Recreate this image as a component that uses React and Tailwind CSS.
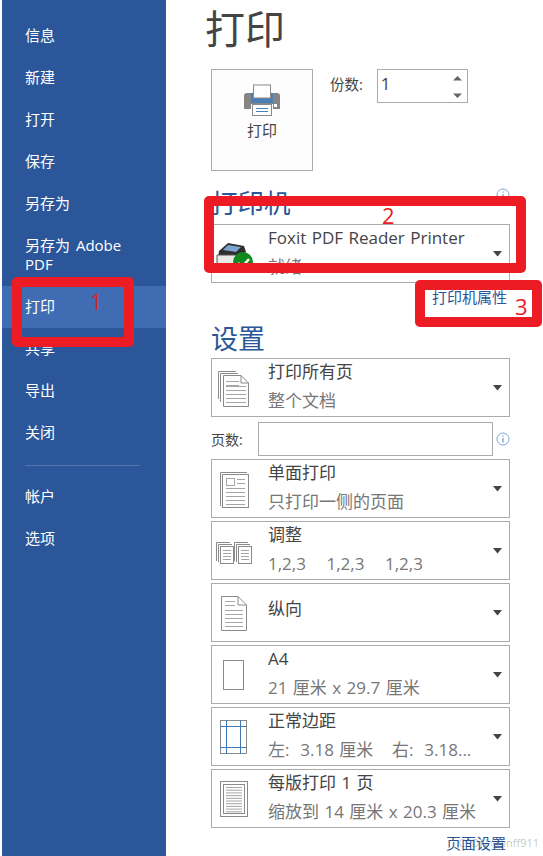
const FONT = { fontFamily: '"Open Sans","Noto Sans CJK SC",sans-serif' };

function Arrow() {
  return <svg width="9" height="6" viewBox="0 0 9 6" className="absolute right-[7px] top-[26px]"><path d="M0 0H9L4.5 5.5Z" fill="#444" /></svg>;
}

function Lines({ x, y, w, n, step = 4, c = "#a6a6a6" }) {
  return Array.from({ length: n }).map((_, i) => <path key={i} d={`M${x} ${y + i * step + 0.5}h${w}`} stroke={c} fill="none" />);
}

const P = "#8a8a8a";
const I = ({ children }) => <svg width="40" height="44" viewBox="0 0 40 44" fill="none" className="shrink-0">{children}</svg>;

const IconAll = () => <I>
  <path d="M4.5 5.5H22M4.5 5.5V33" stroke={P} />
  <path d="M6.5 7.5H24M6.5 7.5V36" stroke={P} />
  <path d="M9.5 9.5H27L34.5 17V40.5H9.5Z" fill="#fff" stroke={P} />
  <path d="M27 9.5V17H34.5" stroke={P} />
  <Lines x={12} y={15} w={13} n={2} />
  <Lines x={12} y={20} w={20} n={5} />
</I>;
const IconSingle = () => <I>
  <path d="M6.5 5.5H33M6.5 5.5V39" stroke={P} />
  <rect x="8.5" y="7.5" width="26" height="33" fill="#fff" stroke={P} />
  <rect x="12.5" y="11.5" width="8" height="7" stroke="#a6a6a6" />
  <Lines x={23} y={12} w={8} n={2} step={4} />
  <Lines x={12} y={21} w={19} n={5} />
</I>;
const Mini = ({ x }) => <g>
  <path d={`M${x + .5} 13.5H${x + 14}M${x + .5} 13.5V32`} stroke={P} />
  <path d={`M${x + 2.5} 15.5H${x + 16}M${x + 2.5} 15.5V33`} stroke={P} />
  <rect x={x + 4.5} y="17.5" width="13" height="17" fill="#fff" stroke={P} />
  <Lines x={x + 7} y={21} w={8} n={4} step={3} />
</g>;
const IconCollate = () => <I><Mini x={2} /><Mini x={20} /></I>;
const IconPortrait = () => <I>
  <path d="M7.5 5.5H24L32.5 14V39.5H7.5Z" stroke={P} fill="#fff" />
  <path d="M24 5.5V14H32.5" stroke={P} />
  <Lines x={11} y={10} w={10} n={2} />
  <Lines x={11} y={19} w={18} n={5} />
</I>;
const IconA4 = () => <I><rect x="9.5" y="7.5" width="20" height="29" stroke={P} fill="#fff" /></I>;
const IconMargin = () => <I>
  <rect x="6.5" y="5.5" width="26" height="33" stroke={P} fill="#fff" />
  <path d="M12.5 5V39M26.5 5V39M6 11.5H33M6 32.5H33" stroke="#3f76b8" />
</I>;
const IconPages = () => <I>
  <rect x="6.5" y="4.5" width="27" height="35" stroke={P} fill="#fff" />
  <rect x="9.5" y="7.5" width="21" height="29" stroke={P} fill="#fff" />
  <Lines x={12} y={10} w={16} n={10} step={2.7} />
</I>;

function Row({ icon, title, sub, className = "" }) {
  return (
    <div className={`relative flex h-[59px] w-[299px] items-center border border-[#ababab] bg-white pl-[2px] ${className}`}>
      {icon}
      <div className="ml-[14px] flex h-full flex-col self-start overflow-hidden whitespace-nowrap [word-spacing:1px]">
        <div className={`text-[17px] leading-[22px] text-[#444] ${sub ? "mt-[2px]" : "mt-[14px]"}`}>{title}</div>
        {sub && <div className="mt-[7px] flex whitespace-pre text-[17px] leading-[22px] text-[#777]">{sub}</div>}
      </div>
      <Arrow />
    </div>
  );
}

function Info({ className = "" }) {
  return <svg width="14" height="14" viewBox="0 0 14 14" fill="none" className={className}><circle cx="7" cy="7" r="6" stroke="#7ea6d8" /><path d="M7 3.5v1.2M7 6v4.5" stroke="#4a7ebb" /></svg>;
}

const NAV1 = ["信息", "新建", "打开", "保存", "另存为"];
const NAV2 = ["共享", "导出", "关闭"];

function NavItem({ children, active, low }) {
  return <div className={`flex h-[42px] items-center pl-[23px] text-[15px] text-white ${low ? "pt-[1px]" : "pb-[2px]"} ${active ? "bg-[#3f6cb3]" : ""}`}>{children}</div>;
}

function RedBox({ className }) {
  return <div className={`absolute rounded-[5px] border-[10px] border-[#ed1c24] ${className}`} />;
}

export default function App() {
  return (
    <div className="relative flex h-[856px] w-[543px] overflow-hidden bg-white pl-[2px]" style={FONT}>
      <aside className="h-full w-[164px] shrink-0 bg-[#2b579a] pt-[14px]">
        {NAV1.map((t) => <NavItem key={t} low>{t}</NavItem>)}
        <div className="flex h-[62px] items-center pl-[23px] pr-[20px] text-[15px] leading-[19px] text-white [word-spacing:2px]">另存为 Adobe PDF</div>
        <NavItem active>打印</NavItem>
        {NAV2.map((t) => <NavItem key={t}>{t}</NavItem>)}
        <div className="mx-[23px] mt-[11px] mb-[10px] h-px w-[115px] bg-[#5577ad]" />
        <NavItem>帐户</NavItem>
        <NavItem>选项</NavItem>
      </aside>

      <main className="flex-1 pl-[45px]">
        <h1 className="-ml-[6px] mt-[3px] h-[51px] text-[40px] font-normal leading-[51px] text-[#444]">打印</h1>

        <div className="mt-[15px] flex items-start">
          <div className="flex h-[102px] w-[102px] flex-col items-center border border-[#ababab] bg-[#fdfdfd] pt-[14px]">
            <svg width="36" height="32" viewBox="0 0 36 32" fill="none">
              <path d="M3 9H33A3 3 0 0 1 36 12V25H29V20H7V25H0V12A3 3 0 0 1 3 9Z" fill="#858585" />
              <rect x="7" y="9" width="22" height="10" fill="#4a7ebb" />
              <rect x="9.5" y="1" width="17" height="13" fill="#fff" stroke="#8a8a8a" />
              <rect x="8.5" y="20.5" width="19" height="11" fill="#fff" stroke="#8a8a8a" />
              <path d="M12 24.5H24M12 27.5H24" stroke="#4a7ebb" />
              <rect x="30" y="20" width="3" height="3" fill="#fff" />
            </svg>
            <div className="mt-[4px] text-[15px] leading-[20px] text-[#444]">打印</div>
          </div>
          <div className="ml-[17px] mt-[6px] text-[14.5px] leading-[20px] text-[#444]">份数:</div>
          <div className="relative ml-[14px] h-[34px] w-[91px] border border-[#ababab] bg-white pl-[3px] text-[17px] leading-[28px] text-[#444]">
            1
            <svg width="11" height="24" viewBox="0 0 11 24" className="absolute right-[4px] top-[5px]"><path d="M1 5.5L5.5 1L10 5.5ZM1 18.5H10L5.5 23Z" fill="#666" /></svg>
          </div>
        </div>

        <div className="relative mt-[15px] h-[38px] w-[299px]">
          <div className="text-[26.5px] leading-[34px] text-[#2b579a]">打印机</div>
          <Info className="absolute right-0 top-[2px]" />
        </div>
        <div className="relative h-[59px] w-[299px] border border-[#ababab] bg-white pl-[2px]">
          <div className="flex h-full items-start">
            <svg width="40" height="44" viewBox="0 0 40 44" fill="none" className="mt-[13px] shrink-0">
              <path d="M5 13L14 5L30 8L32 14L20 22H4Z" fill="#2e2e2e" />
              <path d="M14 7L27 9L22 14L9 12Z" fill="#7aa5cf" />
              <path d="M3 17H22V27H3Z" fill="#e9e9e9" stroke="#555" />
              <circle cx="29" cy="24" r="10" fill="#128a1f" />
              <path d="M24 25L28 29L35 21" stroke="#fff" strokeWidth="2.5" />
            </svg>
            <div className="ml-[14px] whitespace-nowrap [word-spacing:1px]">
              <div className="mt-[2px] text-[17px] leading-[22px] text-[#444]">Foxit PDF Reader Printer</div>
              <div className="mt-[7px] text-[17px] leading-[22px] text-[#777]">就绪</div>
            </div>
          </div>
          <Arrow />
        </div>
        <div className="mt-[4px] w-[296px] text-right text-[15px] leading-[20px] text-[#2b579a]">打印机属性</div>

        <div className="mt-[15px] h-[34px] text-[27px] leading-[34px] text-[#2b579a]">设置</div>

        <div className="mt-[2px] flex w-[299px] flex-col">
          <Row icon={<IconAll />} title="打印所有页" sub="整个文档" />
          <div className="mt-[5px] mb-[3px] flex h-[34px] items-center">
            <div className="w-[47px] text-[14px] text-[#444]">页数:</div>
            <div className="h-[34px] w-[235px] border border-[#ababab] bg-white" />
            <Info className="ml-[3px]" />
          </div>
          <div className="flex flex-col gap-[3px]">
            <Row icon={<IconSingle />} title="单面打印" sub="只打印一侧的页面" />
            <Row icon={<IconCollate />} title="调整" sub={<><span className="w-[58.5px]">1,2,3</span><span className="w-[58.5px]">1,2,3</span><span>1,2,3</span></>} />
            <Row icon={<IconPortrait />} title="纵向" />
            <Row icon={<IconA4 />} title="A4" sub="21 厘米 x 29.7 厘米" />
            <Row icon={<IconMargin />} title="正常边距" sub={<><span className="w-[124px]">左:  3.18 厘米</span><span>右:  3.18...</span></>} />
            <Row icon={<IconPages />} title="每版打印 1 页" sub="缩放到 14 厘米 x 20.3 厘米" />
          </div>
        </div>
        <div className="mt-[5px] w-[295px] text-right text-[15px] leading-[20px] text-[#2b579a]">页面设置</div>
      </main>

      <RedBox className="left-[12px] top-[277px] h-[70px] w-[122px]" />
      <RedBox className="left-[204px] top-[196px] h-[77px] w-[322px]" />
      <RedBox className="left-[415px] top-[280px] h-[47px] w-[127px]" />
      <div className="absolute left-[90px] top-[286px] text-[22px] leading-[30px] text-[#ed1c24]">1</div>
      <div className="absolute left-[382px] top-[200px] text-[22px] leading-[30px] text-[#ed1c24]">2</div>
      <div className="absolute left-[515px] top-[291px] text-[22px] leading-[30px] text-[#ed1c24]">3</div>
      <div className="absolute right-[4px] top-[836px] whitespace-nowrap text-[11px] leading-[14px] text-[#00000040]">CSDN @linff911</div>
    </div>
  );
}
